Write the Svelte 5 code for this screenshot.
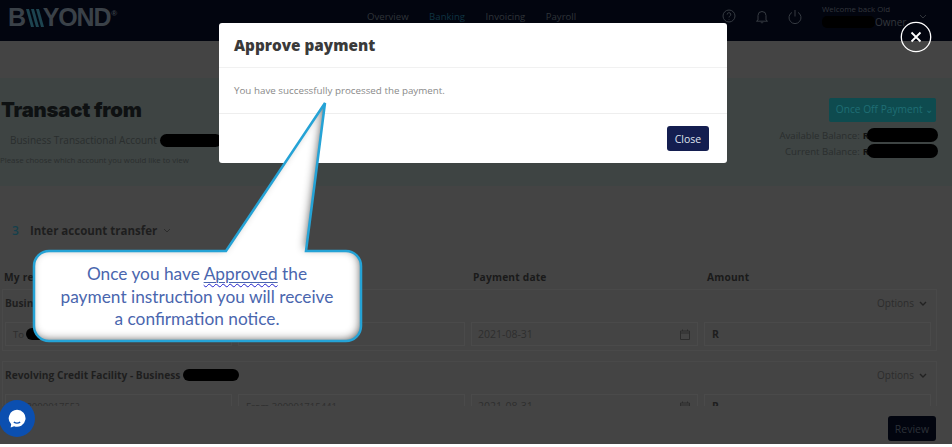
<script>
  const nav = ['Overview', 'Banking', 'Invoicing', 'Payroll']

  const groups = [
    { title: 'Busin', from: 'To', to: '', date: '2021-08-31', hidden: true },
    { title: 'Revolving Credit Facility - Business', from: 'To 300001755?', to: 'From 300001715441', date: '2021-08-31', redact: true }
  ]

  const bubble = 'M49 251H226L325 103L306 251H346a15 15 0 0 1 15 15V326a15 15 0 0 1-15 15H49a15 15 0 0 1-15-15V266a15 15 0 0 1 15-15z'
</script>

<div class="page">
  <header class="topbar">
    <div class="logo">
      <span>B</span>
      <svg width="19" height="20" viewBox="0 0 19 20">
        <polygon points="0,1 3,1 8,19 5,19" fill="#1d4450" />
        <polygon points="5,1 8,1 13,19 10,19" fill="#1d4450" />
        <polygon points="10,1 13,1 18,19 15,19" fill="#1d4450" />
      </svg>
      <span>YOND</span><sup>®</sup>
    </div>
    <nav class="nav">
      {#each nav as item}
        <span class:active={item === 'Banking'}>{item}</span>
      {/each}
    </nav>
    <div class="icons">
      <svg width="14" height="14" viewBox="0 0 14 14" fill="none" stroke="#363b42" stroke-width="1">
        <circle cx="7" cy="7" r="6" />
        <path d="M5.2 5.5a1.8 1.8 0 1 1 2.6 1.6c-.6.3-.8.7-.8 1.3M7 10v.6" />
      </svg>
      <svg width="14" height="15" viewBox="0 0 14 15" fill="none" stroke="#363b42" stroke-width="1">
        <path d="M3 11V6.500a4 4 0 0 1 8 0V11l1.500 1.200h-11zM5.800 13.200a1.400 1.400 0 0 0 2.400 0" />
      </svg>
      <svg width="14" height="15" viewBox="0 0 14 15" fill="none" stroke="#363b42" stroke-width="1">
        <path d="M4 3.400a6 6 0 1 0 6 0M7 1v6.500" />
      </svg>
    </div>
    <div class="user">
      <div class="welcome">Welcome back Old</div>
      <div class="owner"><i class="redact"></i>Owner</div>
    </div>
    <svg class="user-chevron" width="8" height="5" viewBox="0 0 8 5" fill="none" stroke="#30343a">
      <path d="M1 1l3 3 3-3" />
    </svg>
  </header>

  <section class="hero">
    <div class="hero-left">
      <h1>Transact from</h1>
      <div class="account">Business Transactional Account <i class="redact"></i></div>
      <div class="hint">Please choose which account you would like to view</div>
    </div>
    <div class="hero-right">
      <div class="once-off">Once Off Payment ⌄</div>
      <div class="balance">Available Balance: <b>R</b><i class="redact"></i></div>
      <div class="balance">Current Balance: <b>R</b><i class="redact"></i></div>
    </div>
  </section>

  <section class="transfer">
    <div class="step">
      <span class="num">3</span>
      <strong>Inter account transfer</strong>
      <svg width="8" height="5" viewBox="0 0 8 5" fill="none" stroke="#2c2c2c"><path d="M1 1l3 3 3-3" /></svg>
    </div>

    <div class="cols heads">
      <span>My re</span>
      <span></span>
      <span>Payment date</span>
      <span>Amount</span>
    </div>

    {#each groups as group}
      <div class="group">
        <div class="group-head">
          <strong>{group.title}</strong>
          {#if group.redact}<i class="redact"></i>{/if}
          <span class="options">
            Options
            <svg width="8" height="5" viewBox="0 0 8 5" fill="none" stroke="#222" stroke-width="1.400"><path d="M1 1l3 3 3-3" /></svg>
          </span>
        </div>
        <div class="cols">
          <div class="input">
            <span>{group.from}</span>
            {#if group.hidden}<i class="redact"></i>{/if}
          </div>
          <div class="input">{group.to}</div>
          <div class="input date">
            {group.date}
            <svg width="10" height="11" viewBox="0 0 10 11" fill="none" stroke="#2c2c2c">
              <path d="M.5 2h9v8.500h-9zM.5 4h9M2.500 .5V2M7.500 .5V2" />
            </svg>
          </div>
          <div class="input amount">R</div>
        </div>
      </div>
    {/each}
  </section>

  <footer class="actions">
    <button class="review">Review</button>
  </footer>

  <div class="chat">
    <svg width="20" height="21" viewBox="0 0 22 22">
      <path d="M11 1.500a9.300 9.300 0 1 1-3.200 18L4 21l.6-3.700A9.300 9.300 0 0 1 11 1.500z" fill="#fff" />
      <path d="M7.500 15q3.500 2.200 7 0" stroke="#0b4fb0" stroke-width="1.600" fill="none" />
    </svg>
  </div>

  <div class="modal">
    <div class="modal-head">Approve payment</div>
    <div class="modal-body">You have successfully processed the payment.</div>
    <div class="modal-foot"><button class="close">Close</button></div>
  </div>

  <svg class="dismiss" width="32" height="32" viewBox="0 0 32 32" fill="none" stroke="#fff">
    <circle cx="16" cy="16" r="14.700" stroke-width="1.300" />
    <path d="M11.500 11.500l9 9M20.500 11.500l-9 9" stroke-width="1.800" />
  </svg>

  <svg class="callout-shape" width="952" height="447" viewBox="0 0 952 447">
    <defs>
      <filter id="inner" x="-10%" y="-10%" width="120%" height="120%">
        <feComponentTransfer in="SourceAlpha" result="inv">
          <feFuncA type="table" tableValues="1 0" />
        </feComponentTransfer>
        <feGaussianBlur in="inv" stdDeviation="4.500" result="blur" />
        <feOffset in="blur" dx="-2" dy="-2" result="off" />
        <feFlood flood-color="#222" flood-opacity="1" />
        <feComposite in2="off" operator="in" />
        <feComposite in2="SourceAlpha" operator="in" result="shade" />
        <feMerge>
          <feMergeNode in="SourceGraphic" />
          <feMergeNode in="shade" />
        </feMerge>
      </filter>
    </defs>
    <path filter="url(#inner)" fill="#fff" d={bubble} />
    <path fill="none" stroke="#25a3d6" stroke-width="2.500" d={bubble} />
  </svg>
  <div class="callout-text">
    Once you have <span class="approved"><span class="wavy">Approved</span></span> the payment instruction you will receive a confirmation notice.
  </div>
</div>

<style>
  :global(body) {
    margin: 0;
    background: #fff;
  }
  .page {
    position: relative;
    width: 952px;
    height: 444px;
    overflow: hidden;
    background: #444;
    font-family: "Open Sans", sans-serif;
    color: #262626;
  }
  .redact {
    display: inline-block;
    background: #000;
    border-radius: 7px;
  }
  .topbar {
    display: flex;
    align-items: center;
    height: 41px;
    background: #02050f;
    padding-left: 8px;
    position: relative;
  }
  .logo {
    display: flex;
    align-items: center;
    width: 359px;
    font-family: "Liberation Sans", sans-serif;
    font-weight: 700;
    font-size: 25px;
    letter-spacing: -1.200px;
    color: #3a4148;
    margin-top: -6px;
  }
  .logo svg {
    margin: 0 -2px 0 1px;
  }
  .logo sup {
    font-size: 8px;
    align-self: flex-start;
    margin: 6px 0 0 1px;
  }
  .nav {
    display: flex;
    gap: 20.500px;
    width: 363px;
    font-size: 9.600px;
    color: #2f3439;
    margin-top: -9px;
  }
  .nav .active {
    color: #0f3442;
  }
  .icons {
    display: flex;
    gap: 19px;
    margin-top: -9px;
    margin-left: -8px;
  }
  .user {
    margin-left: 20px;
    margin-top: -9px;
    color: #33373d;
  }
  .welcome {
    font-size: 7.900px;
    line-height: 12px;
  }
  .owner {
    display: flex;
    align-items: center;
    font-size: 10px;
    line-height: 14px;
  }
  .owner .redact {
    width: 53px;
    height: 12px;
    border-radius: 5px;
  }
  .user-chevron {
    position: absolute;
    left: 919px;
    top: 14px;
  }
  .hero {
    display: flex;
    justify-content: space-between;
    height: 108px;
    margin-top: 37px;
    background: #3e4443;
    box-sizing: border-box;
    padding-right: 16px;
  }
  .hero h1 {
    margin: 20px 0 0 1px;
    font-family: "Inter", sans-serif;
    font-weight: 900;
    font-size: 20.300px;
    line-height: 24px;
    color: #0e1112;
    letter-spacing: -0.2px;
  }
  .account {
    display: flex;
    align-items: center;
    gap: 3px;
    margin: 10px 0 0 10px;
    font-size: 10px;
    line-height: 16px;
    color: #2a2e2e;
  }
  .account .redact {
    width: 62px;
    height: 13px;
  }
  .hint {
    margin-top: 6px;
    font-size: 7.850px;
    line-height: 12px;
    color: #2a2e2e;
  }
  .hero-right {
    display: flex;
    flex-direction: column;
    align-items: flex-end;
  }
  .once-off {
    margin-top: 20px;
    width: 107px;
    height: 24px;
    box-sizing: border-box;
    padding-left: 4px;
    background: #0e4b4f;
    border-radius: 2px;
    color: #1f6e74;
    font-size: 10.200px;
    line-height: 23px;
    text-align: center;
    margin-bottom: 4px;
  }
  .balance {
    display: flex;
    align-items: center;
    height: 16px;
    font-size: 9.600px;
    color: #2a2e2e;
    gap: 3px;
    margin-right: -2px;
    position: relative;
    top: 1px;
  }
  .balance b {
    color: #111;
  }
  .balance .redact {
    width: 71px;
    height: 14px;
    margin-left: -5px;
  }
  .transfer {
    padding: 36px 15px 0 2px;
  }
  .step {
    display: flex;
    align-items: center;
    height: 16px;
    gap: 6px;
    margin-left: 2px;
    font-size: 11.500px;
    color: #1e1e1e;
  }
  .step .num {
    width: 20px;
    padding-left: 8px;
    box-sizing: border-box;
    color: #14404c;
    font-weight: 600;
    font-size: 12px;
  }
  .cols {
    display: grid;
    grid-template-columns: 227px 227px 227px 1fr;
    gap: 6px;
  }
  .heads {
    margin: 32px 0 4px 2px;
    height: 15px;
    font-size: 10.200px;
    font-weight: 700;
    line-height: 15px;
    letter-spacing: 0.2px;
    color: #1a1a1a;
  }
  .heads span:nth-child(3) {
    margin-left: 3px;
  }
  .heads span:nth-child(4) {
    margin-left: 4px;
  }
  .group {
    padding: 0 5px 0 2px;
    border: 1px solid #494949;
    height: 62px;
    box-sizing: border-box;
    margin-bottom: 10px;
  }
  .group-head {
    display: flex;
    align-items: center;
    gap: 3px;
    height: 26px;
    margin-bottom: 6px;
    padding-right: 4px;
    font-size: 10.200px;
    color: #1e1e1e;
  }
  .group-head .redact {
    width: 56px;
    height: 12px;
  }
  .options {
    display: flex;
    align-items: center;
    gap: 5px;
    margin-left: auto;
    font-size: 10px;
    color: #2c2c2c;
  }
  .input {
    display: flex;
    align-items: center;
    gap: 2px;
    height: 24px;
    box-sizing: border-box;
    border: 1px solid #4a4a4a;
    padding: 0 7px;
    font-size: 9.500px;
    color: #2e2e2e;
  }
  .input .redact {
    width: 40px;
    height: 12px;
  }
  .date {
    justify-content: space-between;
    padding-left: 6px;
    font-size: 10.500px;
  }
  .amount {
    font-size: 10.500px;
    font-weight: 700;
    color: #1e1e1e;
  }
  .actions {
    position: absolute;
    left: 0;
    right: 0;
    bottom: 0;
    height: 38px;
    background: #444;
  }
  .review {
    position: absolute;
    right: 16px;
    bottom: 3px;
    width: 48px;
    height: 25px;
    border: 0;
    border-radius: 3px;
    background: #02050f;
    color: #2c3138;
    font: 10.500px "Open Sans", sans-serif;
  }
  .chat {
    position: absolute;
    left: -1px;
    top: 400px;
    width: 36px;
    height: 37px;
    border-radius: 50%;
    background: #0b4fb0;
    display: flex;
    align-items: center;
    justify-content: center;
  }
  .modal {
    position: absolute;
    left: 219px;
    top: 23px;
    width: 508px;
    height: 140px;
    background: #fff;
    border-radius: 3px;
    display: flex;
    flex-direction: column;
  }
  .modal-head {
    height: 44px;
    padding-left: 15px;
    border-bottom: 1px solid #f1f1f1;
    font-size: 15.300px;
    font-weight: 800;
    line-height: 44px;
    color: #3a3a3a;
  }
  .modal-body {
    height: 45px;
    padding-left: 15px;
    border-bottom: 1px solid #eee;
    font-size: 9.800px;
    line-height: 45px;
    color: #8a8a8a;
  }
  .modal-foot {
    flex: 1;
    display: flex;
    align-items: center;
    justify-content: flex-end;
    padding-right: 18px;
  }
  .close {
    width: 42px;
    height: 25px;
    border: 0;
    border-radius: 3px;
    background: #141e50;
    color: #dfe2ee;
    font: 10.500px "Open Sans", sans-serif;
    padding: 0;
  }
  .dismiss {
    position: absolute;
    left: 900px;
    top: 21px;
  }
  .callout-shape {
    position: absolute;
    left: 0;
    top: 0;
    pointer-events: none;
  }
  .callout-text {
    position: absolute;
    left: 57px;
    top: 263px;
    width: 280px;
    text-align: center;
    font-family: Lato, sans-serif;
    font-size: 17.300px;
    line-height: 22.500px;
    color: #4a66ae;
  }
  .approved {
    text-decoration: underline #4a66ae 1px;
    text-underline-offset: 2px;
  }
  .wavy {
    text-decoration: underline wavy #2222cc 1px;
    text-underline-offset: 3px;
  }
</style>
